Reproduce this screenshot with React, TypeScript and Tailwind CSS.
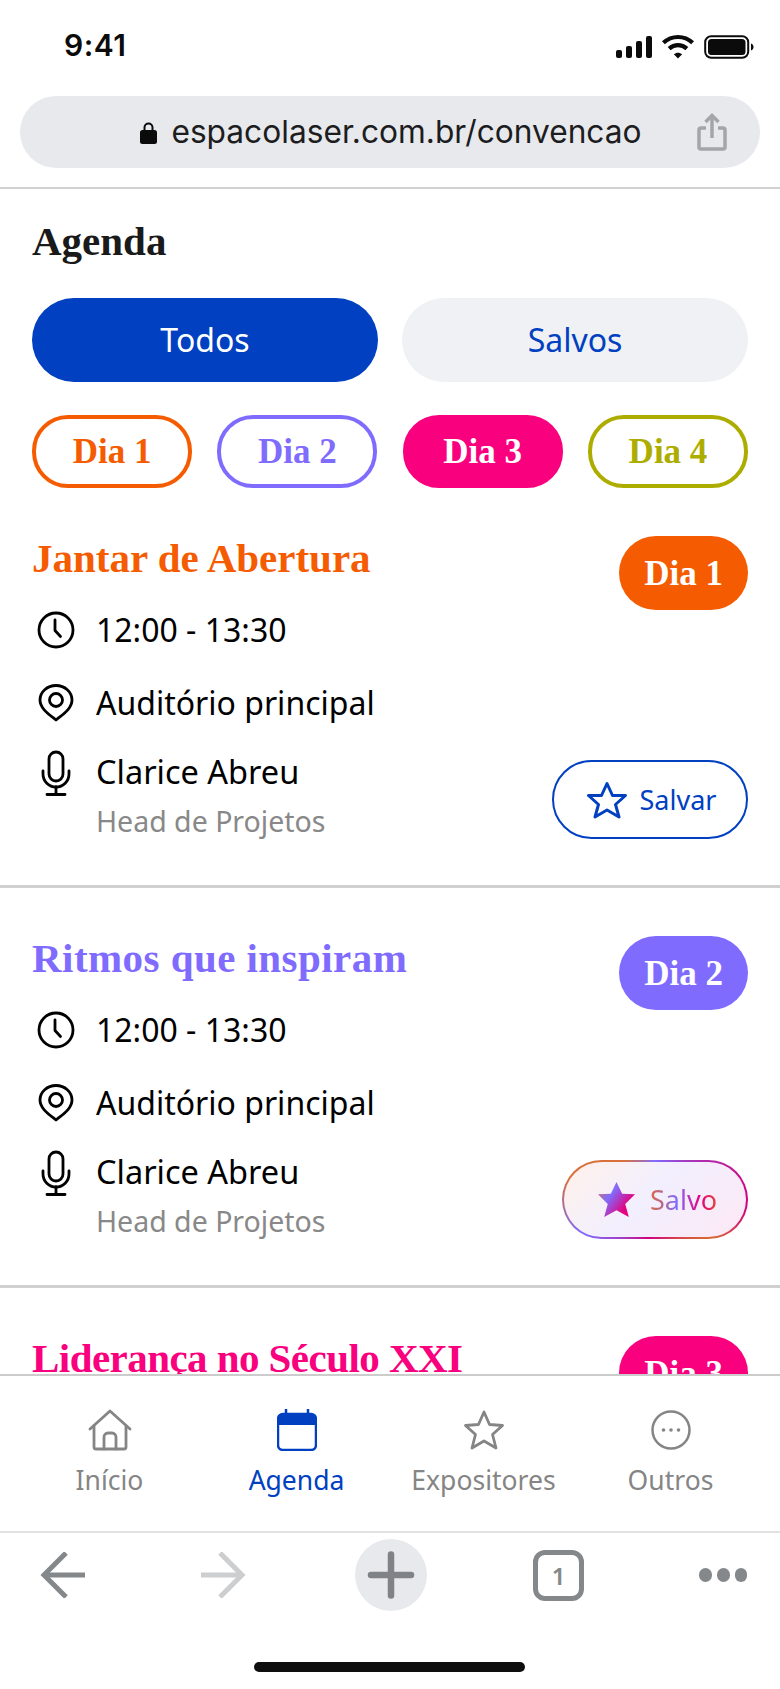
const SANS = "font-['Noto_Sans',sans-serif]";
const SERIF = "font-['Liberation_Serif',serif]";

function StatusBar() {
  return (
    <div className="flex h-[96px] shrink-0 items-start justify-between pl-[64px] pr-[26px] pt-[28px]">
      <span className="font-['Inter',sans-serif] text-[30px] leading-[34px] font-semibold tracking-[0.5px] text-[#0b0b0b]">9:41</span>
      <div className="mt-[6px] flex items-center gap-[9px]">
        <svg width="36" height="22" viewBox="0 0 36 22" fill="#0b0b0b">
          <rect x="0" y="14" width="6" height="8" rx="2" />
          <rect x="10" y="10" width="6" height="12" rx="2" />
          <rect x="20" y="5" width="6" height="17" rx="2" />
          <rect x="30" y="0" width="6" height="22" rx="2" />
        </svg>
        <svg width="34" height="25" viewBox="0 0 32 24" fill="none" stroke="#0b0b0b" strokeWidth="4">
          <path d="M2 8.500c8-7.500 20-7.500 28 0" />
          <path d="M7.500 14c5-4.500 12-4.500 17 0" />
          <path d="M12 19.500 16 23.500 20 19.500C17.500 17.500 14.500 17.500 12 19.500Z" fill="#0b0b0b" stroke="none" />
        </svg>
        <svg width="50" height="24" viewBox="0 0 50 24" fill="none">
          <rect x="1.200" y="1.200" width="43" height="21.600" rx="6" stroke="#0b0b0b" strokeWidth="2" />
          <rect x="4" y="4" width="37.500" height="16" rx="3.500" fill="#0b0b0b" />
          <path d="M47 8.500c1.500.5 2.500 1.800 2.500 3.500s-1 3-2.500 3.500Z" fill="#0b0b0b" />
        </svg>
      </div>
    </div>
  );
}

function UrlBar() {
  return (
    <div className="shrink-0 border-b-2 border-[#d2d2d2] px-[20px] pb-[19px]">
      <div className="relative flex h-[72px] items-center justify-center rounded-[36px] bg-[#e7e9ec] pl-[2px]">
        <svg width="17" height="22" viewBox="0 0 17 22" fill="#0b0b0b" className="mr-[14px] mt-[1px]">
          <path d="M3.500 8V5.500a5 5 0 0 1 10 0V8h1a2.500 2.500 0 0 1 2.500 2.500v9a2.500 2.500 0 0 1-2.500 2.500h-12A2.500 2.500 0 0 1 0 19.500v-9A2.500 2.500 0 0 1 2.500 8Zm2 0h6V5.500a3 3 0 0 0-6 0Z" />
        </svg>
        <span className="font-['Inter',sans-serif] text-[31.700px] leading-[40px] text-[#1d1d1f]">espacolaser.com.br/convencao</span>
        <svg width="30" height="38" viewBox="0 0 30 38" fill="none" stroke="#a3a5a8" strokeWidth="3.500" className="absolute right-[33px] top-[17px]">
          <path d="M9 15H4a2 2 0 0 0-2 2v17a2 2 0 0 0 2 2h22a2 2 0 0 0 2-2V17a2 2 0 0 0-2-2h-5" />
          <path d="M15 25V3" />
          <path d="M8.500 9 15 2.500 21.500 9" />
        </svg>
      </div>
    </div>
  );
}

function DayPill({ label, cls }: { label: string; cls: string }) {
  return (
    <div className={`${SERIF} flex h-[73px] w-[160px] items-center justify-center rounded-[36px] border-[4px] text-[35px] leading-none font-bold ${cls}`}>
      {label}
    </div>
  );
}

function ClockIcon() {
  return (
    <svg width="38" height="38" viewBox="0 0 38 38" fill="none" stroke="#000" strokeWidth="2.800" strokeLinecap="round" strokeLinejoin="round">
      <circle cx="19" cy="19" r="17" />
      <path d="M18 9v10.500l5.500 6" />
    </svg>
  );
}

function PinIcon() {
  return (
    <svg width="36" height="38" viewBox="0 0 36 38" fill="none" stroke="#000" strokeWidth="2.800" strokeLinejoin="round">
      <path d="M18 36C12 31 2 25 2 16a16 14.500 0 0 1 32 0c0 9-10 15-16 20Z" />
      <circle cx="18" cy="16" r="6.500" />
    </svg>
  );
}

function MicIcon() {
  return (
    <svg width="30" height="46" viewBox="0 0 30 46" fill="none" stroke="#000" strokeWidth="2.800" strokeLinecap="round">
      <rect x="8" y="2" width="14" height="29" rx="7" />
      <path d="M2 21v3a13 13 0 0 0 26 0v-3" />
      <path d="M15 37v7M6 44.500h18" />
    </svg>
  );
}

function SaveButton() {
  return (
    <div className="flex h-[79px] w-[196px] items-center justify-center gap-[12px] rounded-[40px] border-2 border-[#0040c1] pl-[2px]">
      <svg width="42" height="38" viewBox="0 0 42 38" fill="none" stroke="#0040c1" strokeWidth="3" strokeLinejoin="round">
        <path d="M21 2.500 26.500 14.500 39.500 14.500 29.500 23.500 33 36 21 29 9 36 12.500 23.500 2.500 14.500 15.500 14.500Z" />
      </svg>
      <span className={`${SANS} text-[27px] leading-none text-[#0040c1]`}>Salvar</span>
    </div>
  );
}

function SavedButton() {
  return (
    <div className="h-[79px] w-[186px] rounded-[40px] bg-[conic-gradient(#7f6cff_0deg,#c0148f_70deg,#d1007f_95deg,#d96a30_125deg,#d1007f_190deg,#7f6cff_245deg,#d9703a_285deg,#d9703a_320deg,#7f6cff_360deg)] p-[2px]">
      <div className="flex h-full w-full items-center justify-center gap-[14px] rounded-[38px] bg-[linear-gradient(135deg,#fff1ea_0%,#f2effe_45%,#fde8f4_100%)] pl-[4px]">
        <svg width="39" height="37" viewBox="0 0 38 36">
          <defs>
            <linearGradient id="saved-star" x1="0" y1="0" x2="1" y2="0.700">
              <stop offset="0" stopColor="#e0663a" />
              <stop offset="0.400" stopColor="#7f6cff" />
              <stop offset="0.850" stopColor="#e6007e" />
            </linearGradient>
          </defs>
          <path d="M19 1 24.500 12.500 37 13 27.500 22.500 31 35 19 28.500 7 35 10.500 22.500 1 13 13.500 12.500Z" fill="url(#saved-star)" strokeLinejoin="round" />
        </svg>
        <span className={`${SANS} bg-[linear-gradient(90deg,#e0663a_0%,#7f6cff_40%,#e6007e_75%,#e0463a_100%)] bg-clip-text text-[27px] leading-none text-transparent`}>Salvo</span>
      </div>
    </div>
  );
}

type Session = { title: string; day: string; titleCls: string; badgeCls: string; saved: boolean };

const sessions: Session[] = [
  { title: "Jantar de Abertura", day: "Dia 1", titleCls: "text-[#f55c02]", badgeCls: "bg-[#f55c02]", saved: false },
  { title: "Ritmos que inspiram", day: "Dia 2", titleCls: "text-[#7f6cff] tracking-[0.45px]", badgeCls: "bg-[#7f6cff]", saved: true },
  { title: "Liderança no Século XXI", day: "Dia 3", titleCls: "text-[#f9007f] tracking-[-0.55px]", badgeCls: "bg-[#f9007f]", saved: false },
];

function SessionCard({ s }: { s: Session }) {
  return (
    <div className="h-[400px] shrink-0 border-b-[3px] border-[#d0d0d0] pl-[28px] pr-[32px] pt-[48px] first:h-[352px] first:pt-0">
      <div className="flex items-start justify-between pl-[4px]">
        <h2 className={`${SERIF} text-[41px] leading-[44px] font-bold ${s.titleCls}`}>{s.title}</h2>
        <div className={`${SERIF} flex h-[74px] w-[129px] items-center justify-center rounded-[37px] text-[35px] leading-none font-bold text-white ${s.badgeCls}`}>
          {s.day}
        </div>
      </div>
      <div className="-mt-[3px] flex h-[46px] items-center pl-[9px]">
        <ClockIcon />
        <span className={`${SANS} ml-[21px] text-[32px] leading-none text-black`}>12:00 - 13:30</span>
      </div>
      <div className="mt-[27px] flex h-[46px] items-center pl-[10px]">
        <PinIcon />
        <span className={`${SANS} ml-[22px] text-[32px] leading-none text-black`}>Auditório principal</span>
      </div>
      <div className="mt-[24px] flex items-start justify-between">
        <div className="flex items-start pl-[13px]">
          <MicIcon />
          <div className="ml-[25px] flex flex-col">
            <span className={`${SANS} text-[32.500px] leading-[44px] text-black`}>Clarice Abreu</span>
            <span className={`${SANS} mt-[9px] text-[28.500px] leading-[36px] text-[#888888]`}>Head de Projetos</span>
          </div>
        </div>
        <div className="mt-[10px]">{s.saved ? <SavedButton /> : <SaveButton />}</div>
      </div>
    </div>
  );
}

function NavItem({ label, active, children }: { label: string; active?: boolean; children: React.ReactNode }) {
  return (
    <div className="flex w-[187px] flex-col items-center">
      <div className="flex h-[42px] items-center justify-center">{children}</div>
      <span className={`${SANS} mt-[12px] text-[26.500px] leading-[34px] ${active ? "text-[#0040c1]" : "text-[#858585]"}`}>{label}</span>
    </div>
  );
}

function BottomNav() {
  return (
    <div className="flex h-[159px] shrink-0 justify-center border-b-2 border-[#e2e2e2] border-t-2 border-t-[#cccccc] bg-white pt-[33px]">
      <NavItem label="Início">
        <svg width="44" height="42" viewBox="0 0 44 42" fill="none" stroke="#858585" strokeWidth="2.800" strokeLinejoin="round" strokeLinecap="round">
          <path d="M2 20 22 2l20 18" />
          <path d="M6 17v21a2 2 0 0 0 2 2h28a2 2 0 0 0 2-2V17" />
          <path d="M16 40V28a4 4 0 0 1 4-4h4a4 4 0 0 1 4 4v12" />
        </svg>
      </NavItem>
      <NavItem label="Agenda" active>
        <svg width="40" height="42" viewBox="0 0 40 42" fill="none">
          <path d="M9 0v6M31 0v6" stroke="#0040c1" strokeWidth="2.500" />
          <rect x="1" y="5" width="38" height="36" rx="5" fill="#ffffff" stroke="#0040c1" strokeWidth="2.500" />
          <path d="M1 16v-6a5 5 0 0 1 5-5h28a5 5 0 0 1 5 5v6Z" fill="#0040c1" />
        </svg>
      </NavItem>
      <NavItem label="Expositores">
        <svg width="42" height="40" viewBox="0 0 42 40" fill="none" stroke="#858585" strokeWidth="2.800" strokeLinejoin="round">
          <path d="M21 2 26.500 14.500 39.500 15.500 29.500 24.500 33 38 21 31 9 38 12.500 24.500 2.500 15.500 15.500 14.500Z" />
        </svg>
      </NavItem>
      <NavItem label="Outros">
        <svg width="40" height="40" viewBox="0 0 40 40" fill="none">
          <circle cx="20" cy="20" r="18.500" stroke="#858585" strokeWidth="2.500" />
          <circle cx="12.500" cy="20" r="1.800" fill="#858585" />
          <circle cx="20" cy="20" r="1.800" fill="#858585" />
          <circle cx="27.500" cy="20" r="1.800" fill="#858585" />
        </svg>
      </NavItem>
    </div>
  );
}

function BrowserBar() {
  return (
    <div className="relative flex h-[156px] shrink-0 items-start justify-between pl-[39px] pr-[33px] pt-[6px]">
      <div className="flex h-[72px] w-[48px] items-center">
        <svg width="46" height="46" viewBox="0 0 46 46" fill="none" stroke="#85888b" strokeWidth="5">
          <path d="M27 1 5 23l22 22" />
          <path d="M5 23h41" />
        </svg>
      </div>
      <div className="ml-[114px] flex h-[72px] w-[48px] items-center">
        <svg width="46" height="46" viewBox="0 0 46 46" fill="none" stroke="#cdcecf" strokeWidth="5">
          <path d="M19 1l22 22-22 22" />
          <path d="M0 23h41" />
        </svg>
      </div>
      <div className="ml-[106px] flex h-[72px] w-[72px] items-center justify-center rounded-full bg-[#e7e9ec]">
        <svg width="48" height="48" viewBox="0 0 48 48" fill="none" stroke="#7f8388" strokeWidth="6.500" strokeLinecap="round">
          <path d="M24 3.500v41M4 24h40" />
        </svg>
      </div>
      <div className="ml-[106px] mt-[11px] flex h-[51px] w-[51px] items-center justify-center rounded-[12px] border-[5px] border-[#85888b]">
        <span className={`${SANS} text-[24px] leading-none font-semibold text-[#85888b]`}>1</span>
      </div>
      <div className="ml-auto flex h-[72px] items-center gap-[5px]">
        <span className="h-[14px] w-[13px] rounded-full bg-[#85888b]" />
        <span className="h-[14px] w-[13px] rounded-full bg-[#85888b]" />
        <span className="h-[14px] w-[12px] rounded-full bg-[#85888b]" />
      </div>
      <div className="absolute bottom-[17px] left-[254px] h-[10px] w-[271px] rounded-full bg-[#0e0e0e]" />
    </div>
  );
}

export default function App() {
  return (
    <div className="flex h-[1689px] w-[780px] flex-col overflow-hidden bg-white">
      <StatusBar />
      <UrlBar />
      <main className="min-h-0 flex-1 overflow-hidden">
        <div className="px-[32px] pt-[28px]">
          <h1 className={`${SERIF} text-[41px] leading-[48px] font-bold text-[#1a1a1a]`}>Agenda</h1>
          <div className="mt-[33px] flex gap-[24px]">
            <div className={`${SANS} flex h-[84px] w-[346px] items-center justify-center rounded-[42px] bg-[#0040c1] text-[32px] leading-none text-white`}>Todos</div>
            <div className={`${SANS} flex h-[84px] w-[346px] items-center justify-center rounded-[42px] bg-[#eff1f4] text-[32px] leading-none text-[#0040c1]`}>Salvos</div>
          </div>
          <div className="mt-[33px] flex justify-between">
            <DayPill label="Dia 1" cls="border-[#f55c02] text-[#f55c02]" />
            <DayPill label="Dia 2" cls="border-[#7f6cff] text-[#7f6cff]" />
            <DayPill label="Dia 3" cls="border-[#f9007f] bg-[#f9007f] text-white" />
            <DayPill label="Dia 4" cls="border-[#adad00] text-[#adad00]" />
          </div>
        </div>
        <div className="mt-[48px] flex flex-col">
          {sessions.map((s) => (
            <SessionCard key={s.title} s={s} />
          ))}
        </div>
      </main>
      <BottomNav />
      <BrowserBar />
    </div>
  );
}
